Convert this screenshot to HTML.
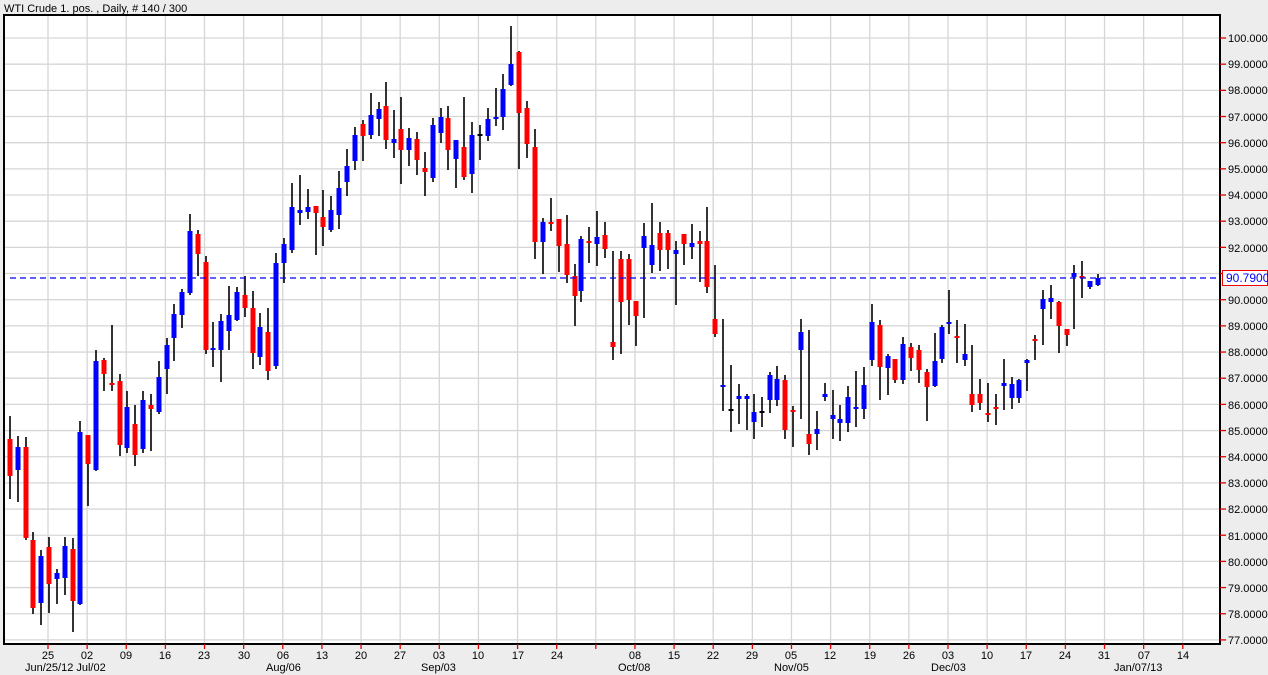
<!DOCTYPE html>
<html><head><meta charset="utf-8"><style>
html,body{margin:0;padding:0;background:#ededed;}
svg{display:block;font-family:"Liberation Sans",Tahoma,sans-serif;}
</style></head><body>
<svg id="s" width="1268" height="675" xmlns="http://www.w3.org/2000/svg">
<rect x="0" y="0" width="1268" height="675" fill="#ededed"/>
<rect x="5" y="15" width="1215" height="629" fill="#fff"/>
<g id="grid" stroke="#d6d6d6" stroke-width="1.3"></g>
<g id="candles"></g>
<line x1="10" y1="278" x2="1220" y2="278" stroke="#0000ff" stroke-width="1.3" stroke-dasharray="6,4"/>
<rect x="4" y="15" width="1216" height="629" fill="none" stroke="#000" stroke-width="2"/>
<g id="ticks" stroke="#e00000" stroke-width="1.3"></g>
<text x="4" y="12" font-size="11" fill="#000">WTI Crude 1. pos. , Daily, # 140 / 300</text>
<g font-size="11" fill="#000">
<text x="1228" y="42">100.0000</text>
<text x="1228" y="68">99.0000</text>
<text x="1228" y="94">98.0000</text>
<text x="1228" y="121">97.0000</text>
<text x="1228" y="147">96.0000</text>
<text x="1228" y="173">95.0000</text>
<text x="1228" y="199">94.0000</text>
<text x="1228" y="225">93.0000</text>
<text x="1228" y="252">92.0000</text>
<text x="1228" y="304">90.0000</text>
<text x="1228" y="330">89.0000</text>
<text x="1228" y="356">88.0000</text>
<text x="1228" y="382">87.0000</text>
<text x="1228" y="409">86.0000</text>
<text x="1228" y="435">85.0000</text>
<text x="1228" y="461">84.0000</text>
<text x="1228" y="487">83.0000</text>
<text x="1228" y="513">82.0000</text>
<text x="1228" y="540">81.0000</text>
<text x="1228" y="566">80.0000</text>
<text x="1228" y="592">79.0000</text>
<text x="1228" y="618">78.0000</text>
<text x="1228" y="644">77.0000</text>
</g>
<rect x="1222.5" y="270.5" width="45" height="15" fill="#fff" stroke="#f00000" stroke-width="1"/>
<text x="1226" y="282" font-size="12" fill="#0000ff">90.7900</text>
<g font-size="11" fill="#000" text-anchor="middle">
<text x="48" y="659">25</text><text x="87" y="659">02</text><text x="126" y="659">09</text><text x="165" y="659">16</text>
<text x="204" y="659">23</text><text x="244" y="659">30</text><text x="283" y="659">06</text><text x="322" y="659">13</text>
<text x="361" y="659">20</text><text x="400" y="659">27</text><text x="439" y="659">03</text><text x="478" y="659">10</text>
<text x="518" y="659">17</text><text x="557" y="659">24</text><text x="635" y="659">08</text>
<text x="674" y="659">15</text><text x="713" y="659">22</text><text x="752" y="659">29</text><text x="791" y="659">05</text>
<text x="830" y="659">12</text><text x="870" y="659">19</text><text x="909" y="659">26</text><text x="948" y="659">03</text>
<text x="987" y="659">10</text><text x="1026" y="659">17</text><text x="1065" y="659">24</text><text x="1104" y="659">31</text>
<text x="1144" y="659">07</text><text x="1183" y="659">14</text>
</g>
<g font-size="11" fill="#000">
<text x="25" y="671">Jun/25/12 Jul/02</text>
<text x="266" y="671">Aug/06</text>
<text x="421" y="671">Sep/03</text>
<text x="618" y="671">Oct/08</text>
<text x="774" y="671">Nov/05</text>
<text x="931" y="671">Dec/03</text>
<text x="1114" y="671">Jan/07/13</text>
</g>
</svg>
<script>
var NS="http://www.w3.org/2000/svg";
function el(p,t,a){var e=document.createElementNS(NS,t);for(var k in a)e.setAttribute(k,a[k]);p.appendChild(e);return e;}
var g=document.getElementById('grid'),tk=document.getElementById('ticks');
for(var i=0;i<30;i++){var x=48+i*39.13;el(g,'line',{x1:x,y1:16,x2:x,y2:643});el(tk,'line',{x1:x,y1:644,x2:x,y2:649});}
for(var j=0;j<24;j++){var y=38+j*26.17;el(g,'line',{x1:5,y1:y,x2:1219,y2:y});el(tk,'line',{x1:1220,y1:y,x2:1226,y2:y});}
var D=[
[10,416,499,439,476,'R'],[18,436,502,447,470,'B'],[26,437,540,447,538,'R'],[33,532,614,540,608,'R'],[41,550,625,556,603,'B'],
[49,537,613,547,584,'R'],[57,569,604,573,579,'B'],[65,537,595,546,578,'B'],[73,538,632,549,601,'R'],[80,421,605,432,604,'B'],
[88,435,506,435,464,'R'],[96,350,471,361,470,'B'],[104,358,391,360,374,'R'],[112,325,391,383,385,'R'],[120,374,456,381,445,'R'],
[127,391,453,407,448,'B'],[135,405,466,424,455,'R'],[143,391,453,400,449,'B'],[151,394,451,405,409,'R'],[159,361,414,377,412,'B'],
[167,338,394,345,369,'B'],[174,304,361,314,338,'B'],[182,289,328,292,315,'B'],[190,214,295,231,293,'B'],[198,230,276,234,254,'R'],
[206,256,354,262,350,'R'],[213,322,367,348,350,'B'],[221,314,382,321,350,'B'],[229,286,350,315,331,'B'],[237,287,321,292,320,'B'],
[245,276,317,295,308,'R'],[253,291,369,308,353,'R'],[260,313,365,327,357,'B'],[268,308,380,332,371,'R'],[276,253,369,263,366,'B'],
[284,238,283,244,263,'B'],[292,183,253,207,250,'B'],[300,175,225,210,213,'B'],[308,189,219,207,212,'B'],[316,206,255,206,213,'R'],
[323,190,246,217,227,'R'],[331,196,232,210,230,'B'],[339,171,229,188,215,'B'],[347,149,196,166,182,'B'],[355,127,170,135,161,'B'],
[363,120,161,124,136,'R'],[371,93,139,115,135,'B'],[379,102,136,109,119,'B'],[386,82,149,106,140,'R'],[394,110,158,139,143,'B'],
[401,97,184,129,150,'R'],[409,128,166,138,150,'B'],[417,132,175,139,160,'R'],[425,152,196,168,172,'R'],[433,118,182,125,178,'B'],
[441,108,143,117,133,'B'],[448,106,170,118,150,'R'],[456,140,188,140,159,'B'],[464,97,180,147,177,'R'],[472,122,193,135,174,'B'],
[480,125,160,134,135,'K'],[488,108,141,119,136,'B'],[496,88,126,117,119,'B'],[503,74,130,89,117,'B'],[511,26,86,64,85,'B'],
[519,51,169,52,113,'R'],[527,101,158,108,144,'R'],[535,129,259,147,242,'R'],[543,218,274,222,242,'B'],[551,198,231,222,224,'R'],
[559,219,272,219,246,'R'],[567,215,283,244,275,'R'],[575,264,326,276,296,'R'],[581,236,302,239,291,'B'],[589,227,263,241,243,'R'],
[597,211,266,237,244,'B'],[605,222,258,235,249,'R'],[613,251,360,342,347,'R'],[621,251,354,259,302,'R'],[629,254,325,259,300,'R'],
[636,301,346,301,316,'R'],[644,223,318,236,248,'B'],[652,203,273,245,265,'B'],[660,222,271,233,250,'R'],[668,230,269,233,250,'R'],
[676,241,305,250,254,'B'],[684,234,265,234,244,'R'],[692,224,259,243,247,'B'],[700,231,282,241,244,'R'],[707,207,293,241,287,'R'],
[715,265,337,319,334,'R'],[723,319,411,385,387,'B'],[731,365,432,409,411,'K'],[739,384,424,396,399,'B'],[747,394,430,396,399,'B'],
[754,394,439,412,422,'B'],[762,397,427,411,413,'K'],[770,372,413,375,400,'B'],[777,366,406,379,400,'B'],[785,375,439,380,430,'R'],
[793,406,447,410,412,'R'],[801,319,419,332,350,'B'],[809,330,455,434,444,'R'],[817,411,450,429,434,'B'],[825,383,401,394,397,'B'],
[833,390,439,415,419,'B'],[840,405,441,419,423,'B'],[848,386,432,397,423,'B'],[856,371,427,407,409,'B'],[864,367,419,385,409,'B'],
[872,304,366,322,360,'B'],[880,320,400,325,367,'R'],[888,354,395,356,368,'B'],[895,359,383,359,380,'R'],[903,337,384,344,380,'B'],
[911,343,371,347,358,'R'],[919,345,383,350,370,'R'],[927,369,421,372,387,'R'],[935,333,387,361,386,'B'],[942,325,363,327,359,'B'],
[949,290,334,322,324,'B'],[957,320,363,336,338,'R'],[965,324,366,354,360,'B'],[972,345,412,394,405,'R'],[980,379,410,394,403,'R'],
[988,383,422,413,415,'R'],[996,394,425,407,409,'R'],[1004,359,410,383,386,'B'],[1012,377,409,384,398,'B'],[1019,379,403,380,398,'B'],
[1027,359,391,360,363,'B'],[1035,335,360,339,341,'R'],[1043,290,345,299,309,'B'],[1051,285,319,298,302,'B'],[1059,301,353,302,326,'R'],
[1067,329,346,329,335,'R'],[1074,265,329,273,277,'B'],[1082,261,298,276,278,'R'],[1090,281,289,281,287,'B'],[1098,274,286,278,285,'B']
];
var cg=document.getElementById('candles');
var col={R:'#ff0000',B:'#0000ff',K:'#000000'};
D.forEach(function(d){
 el(cg,'line',{x1:d[0],y1:d[1],x2:d[0],y2:d[2],stroke:'#000','stroke-width':1.6});
 var h=Math.max(2,d[4]-d[3]);
 el(cg,'rect',{x:d[0]-2.5,y:d[3],width:5,height:h,fill:col[d[5]]});
});
</script>
</body></html>
